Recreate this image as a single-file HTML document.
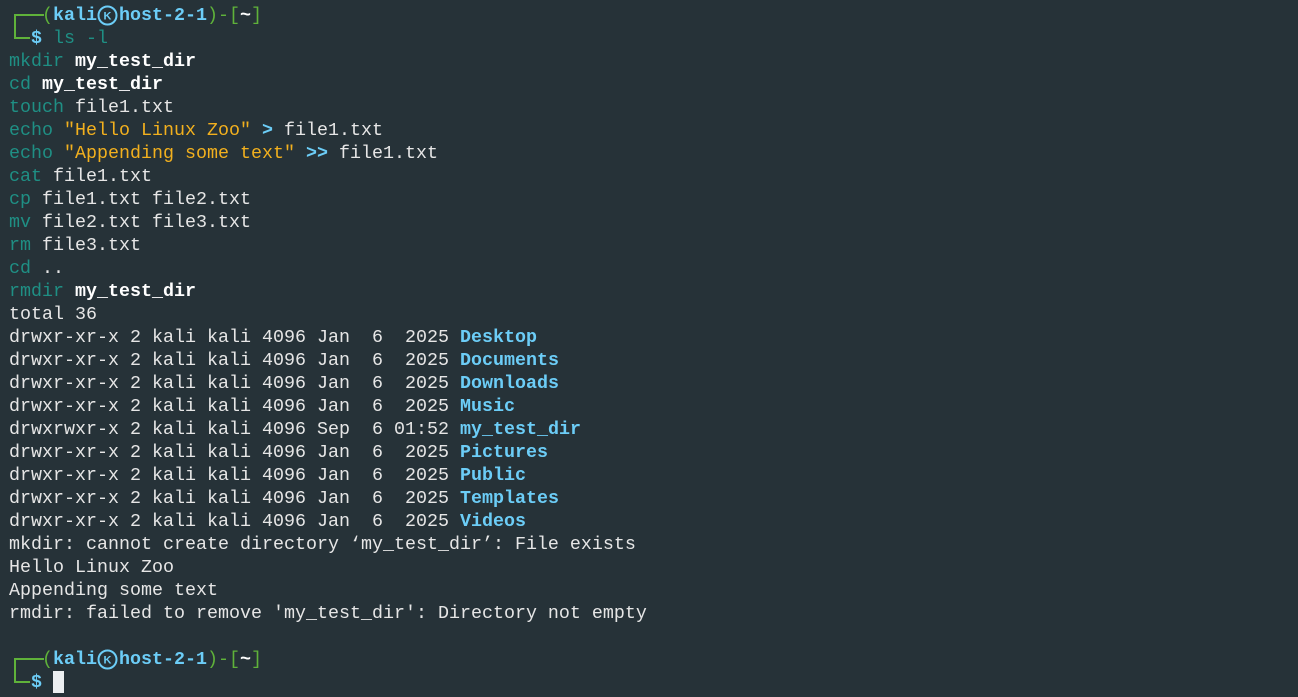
<!DOCTYPE html>
<html><head><meta charset="utf-8"><style>
html,body{margin:0;padding:0;background:#263238;width:1298px;height:697px;overflow:hidden}
pre{margin:0;padding:4px 0 0 9px;font-family:"Liberation Mono","DejaVu Sans Mono",monospace;font-size:18.33px;line-height:23px;color:#e6e6e6;white-space:pre}
.g{color:#5fb23a}.b{color:#6ccdf7;font-weight:bold}.t{color:#1f8f84}.y{color:#f2b01e}.w{color:#fff;font-weight:bold}
.box{display:inline-block;width:33px;height:23px;vertical-align:top;position:relative}
.box2{width:22px}
.box i{position:absolute;left:5px;width:28px;border-color:#5fb23a;border-style:solid}
.box2 i{width:14px}
.k{display:inline-block;width:22px;height:23px;vertical-align:top;position:relative}
.cur{display:inline-block;width:11px;height:22px;background:#eceff1;vertical-align:top}
</style></head><body><pre><span class="box"><i style="top:10px;height:13px;border-width:2px 0 0 2px"></i></span><span class="g">(</span><span class="b">kali</span><span class="k"><svg width="22" height="23" viewBox="0 0 22 23"><circle cx="10.5" cy="11.5" r="9" fill="none" stroke="#6ccdf7" stroke-width="2"/><text x="10.5" y="15.5" font-size="11" font-family="Liberation Sans" font-weight="bold" fill="#6ccdf7" text-anchor="middle">K</text></svg></span><span class="b">host-2-1</span><span class="g">)-[</span><span class="w">~</span><span class="g">]</span>
<span class="box box2"><i style="top:-1px;height:11px;border-width:0 0 2px 2px"></i></span><span class="b">$</span> <span class="t">ls -l</span>
<span class="t">mkdir</span> <span class="w">my_test_dir</span>
<span class="t">cd</span> <span class="w">my_test_dir</span>
<span class="t">touch</span> file1.txt
<span class="t">echo</span> <span class="y">"Hello Linux Zoo"</span> <span class="b">&gt;</span> file1.txt
<span class="t">echo</span> <span class="y">"Appending some text"</span> <span class="b">&gt;&gt;</span> file1.txt
<span class="t">cat</span> file1.txt
<span class="t">cp</span> file1.txt file2.txt
<span class="t">mv</span> file2.txt file3.txt
<span class="t">rm</span> file3.txt
<span class="t">cd</span> ..
<span class="t">rmdir</span> <span class="w">my_test_dir</span>
total 36
drwxr-xr-x 2 kali kali 4096 Jan  6  2025 <span class="b">Desktop</span>
drwxr-xr-x 2 kali kali 4096 Jan  6  2025 <span class="b">Documents</span>
drwxr-xr-x 2 kali kali 4096 Jan  6  2025 <span class="b">Downloads</span>
drwxr-xr-x 2 kali kali 4096 Jan  6  2025 <span class="b">Music</span>
drwxrwxr-x 2 kali kali 4096 Sep  6 01:52 <span class="b">my_test_dir</span>
drwxr-xr-x 2 kali kali 4096 Jan  6  2025 <span class="b">Pictures</span>
drwxr-xr-x 2 kali kali 4096 Jan  6  2025 <span class="b">Public</span>
drwxr-xr-x 2 kali kali 4096 Jan  6  2025 <span class="b">Templates</span>
drwxr-xr-x 2 kali kali 4096 Jan  6  2025 <span class="b">Videos</span>
mkdir: cannot create directory ‘my_test_dir’: File exists
Hello Linux Zoo
Appending some text
rmdir: failed to remove 'my_test_dir': Directory not empty

<span class="box"><i style="top:10px;height:13px;border-width:2px 0 0 2px"></i></span><span class="g">(</span><span class="b">kali</span><span class="k"><svg width="22" height="23" viewBox="0 0 22 23"><circle cx="10.5" cy="11.5" r="9" fill="none" stroke="#6ccdf7" stroke-width="2"/><text x="10.5" y="15.5" font-size="11" font-family="Liberation Sans" font-weight="bold" fill="#6ccdf7" text-anchor="middle">K</text></svg></span><span class="b">host-2-1</span><span class="g">)-[</span><span class="w">~</span><span class="g">]</span>
<span class="box box2"><i style="top:-1px;height:11px;border-width:0 0 2px 2px"></i></span><span class="b">$</span> <span class="cur"></span></pre></body></html>
